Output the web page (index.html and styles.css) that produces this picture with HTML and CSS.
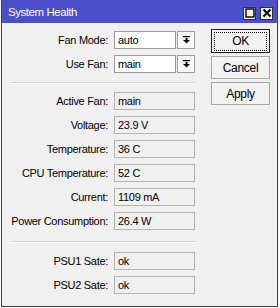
FILE: index.html
```html
<!DOCTYPE html>
<html>
	<head>
		<link rel="stylesheet" href="styles.css">
	</head>
	<body>
		<div class="window">
			<div class="titlebar">
				<span class="title">System Health</span>
				<span class="tb_btn">
					<svg width="10" height="10" viewBox="0 0 10 10"><rect x="1" y="1" width="8" height="8" fill="none" stroke="#000" stroke-width="1.4"/></svg>
				</span>
				<span class="tb_btn">
					<svg width="10" height="10" viewBox="0 0 10 10"><path d="M1.5 1.5 L8.5 8.5 M8.5 1.5 L1.5 8.5" stroke="#000" stroke-width="2"/></svg>
				</span>
			</div>
			<div class="content">
				<div class="form">
					<div class="row">
						<label>Fan Mode:</label>
						<span class="field edit">auto</span>
						<span class="drop">
							<svg width="7" height="8" viewBox="0 0 7 8"><rect x="0" y="0" width="7" height="1.2"/><rect x="2.5" y="2" width="2" height="2"/><path d="M0 4 L7 4 L3.5 7.5 Z"/></svg>
						</span>
					</div>
					<div class="row">
						<label>Use Fan:</label>
						<span class="field edit">main</span>
						<span class="drop">
							<svg width="7" height="8" viewBox="0 0 7 8"><rect x="0" y="0" width="7" height="1.2"/><rect x="2.5" y="2" width="2" height="2"/><path d="M0 4 L7 4 L3.5 7.5 Z"/></svg>
						</span>
					</div>
					<div class="sep"></div>
					<div class="row">
						<label>Active Fan:</label>
						<span class="field">main</span>
					</div>
					<div class="row">
						<label>Voltage:</label>
						<span class="field">23.9 V</span>
					</div>
					<div class="row">
						<label>Temperature:</label>
						<span class="field">36 C</span>
					</div>
					<div class="row">
						<label>CPU Temperature:</label>
						<span class="field">52 C</span>
					</div>
					<div class="row">
						<label>Current:</label>
						<span class="field">1109 mA</span>
					</div>
					<div class="row">
						<label>Power Consumption:</label>
						<span class="field">26.4 W</span>
					</div>
					<div class="sep wide"></div>
					<div class="row">
						<label>PSU1 Sate:</label>
						<span class="field">ok</span>
					</div>
					<div class="row">
						<label>PSU2 Sate:</label>
						<span class="field">ok</span>
					</div>
				</div>
				<div class="actions">
					<button class="btn default"><span>OK</span></button>
					<button class="btn"><span>Cancel</span></button>
					<button class="btn"><span>Apply</span></button>
				</div>
			</div>
		</div>
	</body>
</html>
```
FILE: styles.css
```css
body {
	margin: 0;
	background: #fafafa;
	font-family: "Liberation Sans", Arial, sans-serif;
	font-size: 11px;
	letter-spacing: -0.3px;
	color: #000;
}

.window {
	box-sizing: border-box;
	width: 277px;
	height: 307px;
	margin-left: 1px;
	border: 1px solid #404040;
	border-top: none;
	background: #f0f0f0;
}

.titlebar {
	height: 23px;
	background: #4b50c8;
	display: flex;
	align-items: center;
	padding: 0 4px 0 6px;
}
.title {
	flex: 1;
	color: #fff;
	font-size: 11.5px;
	letter-spacing: -0.45px;
	padding-top: 1px;
}
.tb_btn {
	box-sizing: border-box;
	width: 13px;
	height: 13px;
	margin-left: 4px;
	margin-top: 3px;
	background: #f0f0f0;
	border: 1px solid #303030;
	display: flex;
	align-items: center;
	justify-content: center;
}

.content {
	display: flex;
}

.form {
	width: 194px;
	padding-top: 8px;
	display: flex;
	flex-direction: column;
}

.row {
	display: flex;
	align-items: center;
	height: 18px;
	margin-bottom: 6px;
}
.row label {
	width: 106px;
	text-align: right;
	margin-right: 6px;
}

.field {
	box-sizing: border-box;
	width: 81px;
	height: 18px;
	line-height: 16px;
	padding-left: 3px;
	border: 1px solid #b4b4b4;
	background: #f0f0f0;
}
.field.edit {
	width: 62px;
	background: #fff;
	border-color: #9c9c9c;
}
.drop {
	box-sizing: border-box;
	width: 18px;
	height: 18px;
	margin-left: 1px;
	border: 1px solid #9c9c9c;
	background: #fbfbfb;
	display: flex;
	align-items: center;
	justify-content: center;
}

.sep {
	margin: 3px 0 8px 8px;
	height: 0;
	border-top: 1px solid #d4d4d4;
	border-bottom: 1px solid #fcfcfc;
}
.sep.wide {
	margin: 5px 0 9px 8px;
}

.actions {
	display: flex;
	flex-direction: column;
	gap: 3px;
	padding: 6px 0 0 15px;
}

.btn {
	box-sizing: border-box;
	width: 59px;
	height: 23px;
	padding: 2px;
	border: 1px solid #a6a6a6;
	background: #f2f2f2;
	font-family: inherit;
	font-size: 12px;
	letter-spacing: -0.3px;
	color: #000;
}
.btn span {
	display: block;
	line-height: 17px;
	border: 1px solid transparent;
}
.btn.default {
	height: 24px;
	border-color: #1e1e1e;
}
.btn.default span {
	border: 1px dotted #000;
}
```
